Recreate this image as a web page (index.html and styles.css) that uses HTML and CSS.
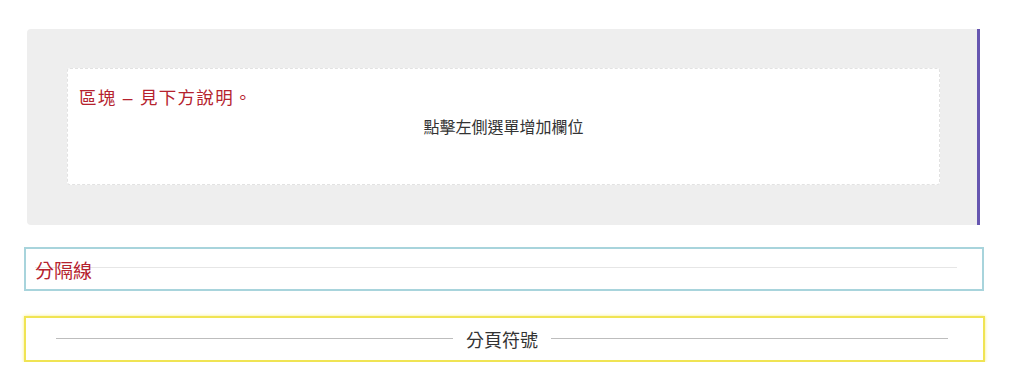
FILE: index.html
```html
<!DOCTYPE html>
<html lang="zh-Hant">
<head>
<meta charset="utf-8">
<title>表單</title>
<link rel="stylesheet" href="styles.css">
</head>
<body>
<div class="page">
  <div class="block">
    <div class="block-inner">
      <div class="block-title">區塊 – 見下方說明。</div>
      <div class="block-hint">點擊左側選單增加欄位</div>
    </div>
  </div>
  <div class="separator">
    <span class="separator-label">分隔線</span>
  </div>
  <div class="pagebreak">
    <span class="pagebreak-line"></span>
    <span class="pagebreak-label">分頁符號</span>
    <span class="pagebreak-line"></span>
  </div>
</div>
</body>
</html>
```

FILE: styles.css
```css
* { box-sizing: border-box; }
html, body { margin: 0; background: #fff; }
body {
  font-family: "Noto Sans CJK TC", "Noto Sans", sans-serif;
  color: #333;
}
.page {
  padding: 29px 0 0 24px;
  width: 990px;
}
.block {
  margin-left: 3px;
  width: 953px;
  background: #eeeeee;
  border-right: 3px solid #6656b0;
  border-radius: 4px 0 0 4px;
  padding: 39px 37px 40px 40px;
}
.block-inner {
  background: #fff;
  border: 1px dashed #e2e2e2;
  border-radius: 3px;
  height: 117px;
  padding: 17px 11px 0;
}
.block-title {
  font-family: "Liberation Sans", "Noto Sans CJK TC", sans-serif;
  color: #b5222e;
  font-size: 17.5px;
  line-height: 24px;
  letter-spacing: 1.3px;
}
.block-hint {
  margin-top: 4px;
  text-align: center;
  font-size: 16px;
  line-height: 24px;
  color: #333;
}
.separator {
  position: relative;
  margin-top: 22px;
  width: 960px;
  height: 44px;
  border: 2px solid #a8d4dc;
  padding: 0 9px;
  display: flex;
  align-items: center;
}
.separator::before {
  content: "";
  position: absolute;
  left: 9px;
  right: 25px;
  top: 18px;
  border-top: 1px solid #e6e6e6;
}
.separator-label {
  position: relative;
  color: #b5222e;
  font-size: 19px;
  line-height: 24px;
  margin-top: 1px;
}
.pagebreak {
  margin-top: 25px;
  width: 961px;
  height: 46px;
  border: 2px solid #f0e454;
  box-shadow: 0 0 3px rgba(245, 235, 90, 0.8);
  padding: 0 35px 0 30px;
  display: flex;
  align-items: center;
  gap: 13px;
}
.pagebreak-line {
  flex: 1;
  border-top: 1px solid #bdbdbd;
  margin-top: -2px;
}
.pagebreak-label {
  font-size: 18px;
  line-height: 24px;
  color: #333;
}
```
